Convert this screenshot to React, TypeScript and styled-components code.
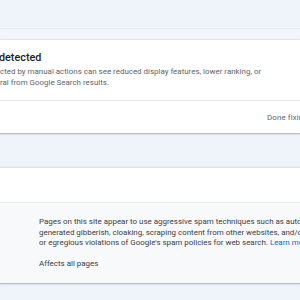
import React from "react";
import styled, { createGlobalStyle } from "styled-components";

const Global = createGlobalStyle`
  html, body { margin: 0; padding: 0; }
  body {
    background: #eff3fa;
    font-family: Roboto, "Liberation Sans", Arial, sans-serif;
    -webkit-font-smoothing: antialiased;
  }
`;

const Page = styled.div`
  width: 300px;
  height: 300px;
  overflow: hidden;
  background: #eff3fa;
  display: flex;
  flex-direction: column;
`;

const TopBar = styled.div`
  height: 28px;
  flex: none;
  background: #eff3fa;
`;

const SubBar = styled.div`
  height: 10px;
  flex: none;
  background: #f2f5fb;
  border-top: 1px solid #e4e8ef;
  border-bottom: 1px solid #e6e9ef;
`;

const Card = styled.section<{ $gap?: number }>`
  flex: none;
  background: #ffffff;
  margin-top: ${(p) => p.$gap ?? 0}px;
  box-shadow: 0 1px 1px rgba(60, 64, 67, 0.25), 0 1px 3px rgba(60, 64, 67, 0.12);
  border-top: ${(p) => (p.$gap ? "1px solid #dfe2e7" : "none")};
`;

const CardBody = styled.div`
  padding: 11px 0 12px 0;
  white-space: nowrap;
`;

const Title = styled.h2`
  margin: 0 0 2px -1px;
  font-size: 10.8px;
  line-height: 14px;
  font-weight: 500;
  color: #202124;
`;

const Desc = styled.p`
  margin: 0;
  font-size: 7.95px;
  line-height: 10.6px;
  color: #5f6368;
`;

const Divider = styled.div`
  height: 1px;
  background: #e8eaed;
`;

const Footer = styled.div`
  height: 32px;
  display: flex;
  align-items: center;
  padding-left: 267px;
  white-space: nowrap;
  overflow: hidden;
`;

const FooterButton = styled.span`
  font-size: 7.95px;
  color: #5f6368;
  letter-spacing: 0.1px;
`;

const HeaderRow = styled.div`
  height: 34px;
`;

const Detail = styled.div`
  background: #f8f9fa;
  border-top: 1px solid #e8eaed;
  padding: 14px 0 13px 39px;
  white-space: nowrap;
`;

const DetailText = styled.p<{ $gap?: number }>`
  margin: ${(p) => p.$gap ?? 0}px 0 0 0;
  font-size: 7.95px;
  line-height: 10.6px;
  color: #3c4043;
`;

const Link = styled.a`
  color: #1a5fd0;
  text-decoration: none;
`;

export default function App() {
  return (
    <>
      <Global />
      <Page>
        <TopBar />
        <SubBar />
        <Card>
          <CardBody>
            <Title>detected</Title>
            <Desc>
              cted by manual actions can see reduced display features, lower ranking, or
              <br />
              ral from Google Search results.
            </Desc>
          </CardBody>
          <Divider />
          <Footer>
            <FooterButton>Done fixing</FooterButton>
          </Footer>
        </Card>
        <Card $gap={34}>
          <HeaderRow />
          <Detail>
            <DetailText>
              Pages on this site appear to use aggressive spam techniques such as automatically
              <br />
              generated gibberish, cloaking, scraping content from other websites, and/or repeated
              <br />
              or egregious violations of Google's spam policies for web search. <Link>Learn more</Link>
            </DetailText>
            <DetailText $gap={10}>Affects all pages</DetailText>
          </Detail>
        </Card>
      </Page>
    </>
  );
}
